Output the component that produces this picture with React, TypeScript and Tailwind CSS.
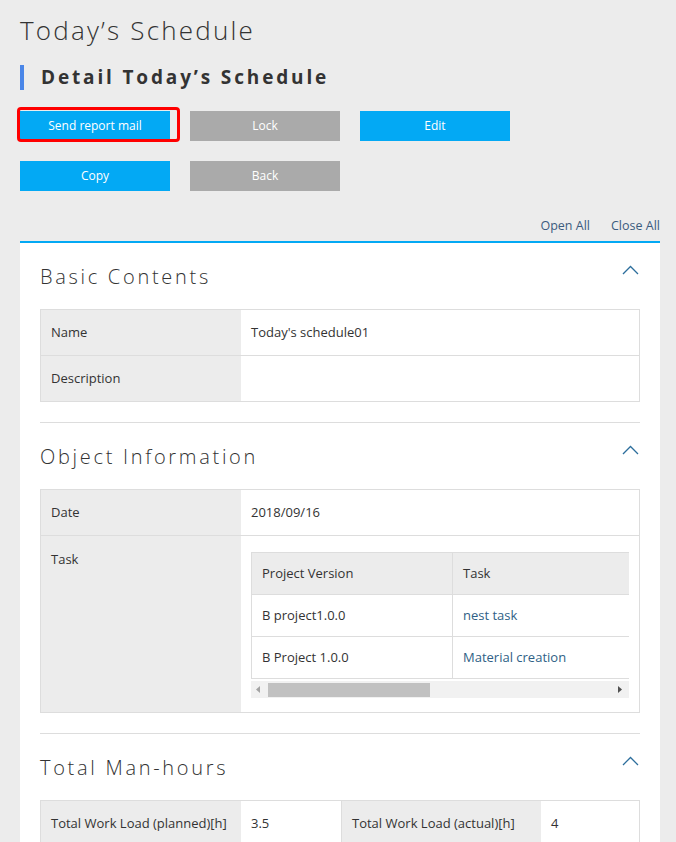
import React from "react";

const Chevron = () => (
  <svg width="17" height="10" viewBox="0 0 17 10" className="absolute right-[1px] top-[22px]">
    <path d="M1 9 L8.5 1.5 L16 9" fill="none" stroke="#2c6e9c" strokeWidth="1.3" />
  </svg>
);

const SectionHead = ({ title }: { title: string }) => (
  <div className="relative pt-[22px] pb-[20px]">
    <div className="text-[20px] leading-[24px] tracking-[2.7px] font-light text-[#333]">{title}</div>
    <Chevron />
  </div>
);

const Row = ({ label, value, last }: { label: string; value: string; last?: boolean }) => (
  <div className={`grid grid-cols-[200px_minmax(0,1fr)] ${last ? "" : "border-b border-[#dddddd]"}`}>
    <div className="bg-[#ececec] pl-[10px] py-[12px] leading-[21px]">{label}</div>
    <div className="pl-[10px] py-[12px] leading-[21px]">{value}</div>
  </div>
);

export default function App() {
  return (
    <div className="w-full h-screen overflow-hidden bg-[#ececec]">
      <div className="pl-5 pr-4 pt-[13px] pb-10 text-[13px] text-[#333] font-['Open_Sans',sans-serif]">
        <h1 className="text-[26px] leading-[34px] tracking-[2.2px] font-light text-[#333]">Today’s Schedule</h1>
        <div className="mt-[18px] flex items-center">
          <div className="w-[4px] h-[25px] bg-[#4a86e8]" />
          <h2 className="ml-[17px] text-[19px] leading-[25px] font-bold tracking-[2.85px] text-[#333]">Detail Today’s Schedule</h2>
        </div>
        <div className="mt-[21px] flex gap-5">
          <div className="relative">
            <button className="w-[150px] h-[30px] bg-[#03a9f4] text-white text-[12px]">Send report mail</button>
            <div className="absolute left-[-3px] top-[-4px] w-[163px] h-[35px] border-[3px] border-[#ff0000] rounded-[4px]" />
          </div>
          <button className="w-[150px] h-[30px] bg-[#aaaaaa] text-white text-[12px]">Lock</button>
          <button className="w-[150px] h-[30px] bg-[#03a9f4] text-white text-[12px]">Edit</button>
        </div>
        <div className="mt-5 flex gap-5">
          <button className="w-[150px] h-[30px] bg-[#03a9f4] text-white text-[12px]">Copy</button>
          <button className="w-[150px] h-[30px] bg-[#aaaaaa] text-white text-[12px]">Back</button>
        </div>
        <div className="mt-[26px] flex justify-end gap-[21px] text-[#3b5b7e] text-[12.5px] leading-[18px]">
          <span>Open All</span>
          <span>Close All</span>
        </div>
        <div className="mt-[6px] border-t-2 border-[#03a9f4] bg-white px-5">
          <section className="border-b border-[#dddddd] pb-5">
            <SectionHead title="Basic Contents" />
            <div className="border border-[#dddddd]">
              <Row label="Name" value="Today's schedule01" />
              <Row label="Description" value="" last />
            </div>
          </section>
          <section className="border-b border-[#dddddd] pb-5">
            <SectionHead title="Object Information" />
            <div className="border border-[#dddddd]">
              <Row label="Date" value="2018/09/16" />
              <div className="grid grid-cols-[200px_minmax(0,1fr)]">
                <div className="bg-[#ececec] pl-[10px] pt-[13px] leading-[21px]">Task</div>
                <div className="min-w-0 px-[10px] pt-[16px] pb-[14px]">
                  <div className="overflow-hidden">
                    <div className="w-[520px] border-l border-t border-[#dddddd]">
                      <div className="grid grid-cols-[201px_1fr] bg-[#ececec] border-b border-[#dddddd]">
                        <div className="border-r border-[#dddddd] pl-[10px] h-[41px] flex items-center">Project Version</div>
                        <div className="pl-[10px] h-[41px] flex items-center">Task</div>
                      </div>
                      <div className="grid grid-cols-[201px_1fr] border-b border-[#dddddd]">
                        <div className="border-r border-[#dddddd] pl-[10px] h-[41px] flex items-center">B project1.0.0</div>
                        <div className="pl-[10px] h-[41px] flex items-center text-[#2f5f86]">nest task</div>
                      </div>
                      <div className="grid grid-cols-[201px_1fr] border-b border-[#dddddd]">
                        <div className="border-r border-[#dddddd] pl-[10px] h-[41px] flex items-center">B Project 1.0.0</div>
                        <div className="pl-[10px] h-[41px] flex items-center text-[#2f5f86]">Material creation</div>
                      </div>
                    </div>
                  </div>
                  <div className="mt-[2px] h-[17px] bg-[#f1f1f1] flex items-center">
                    <svg width="17" height="17" viewBox="0 0 17 17"><path d="M9 5 L5 8.5 L9 12 Z" fill="#a3a3a3" /></svg>
                    <div className="w-[162px] h-[14px] bg-[#c1c1c1]" />
                    <div className="flex-1" />
                    <svg width="17" height="17" viewBox="0 0 17 17"><path d="M6 5 L10 8.5 L6 12 Z" fill="#505050" /></svg>
                  </div>
                </div>
              </div>
            </div>
          </section>
          <section className="pb-5">
            <SectionHead title="Total Man-hours" />
            <div className="border border-[#dddddd] grid grid-cols-[200px_100px_200px_minmax(0,1fr)]">
              <div className="bg-[#ececec] pl-[10px] py-[12px] leading-[21px]">Total Work Load (planned)[h]</div>
              <div className="pl-[10px] py-[12px] leading-[21px]">3.5</div>
              <div className="bg-[#ececec] pl-[10px] py-[12px] leading-[21px] border-l border-[#dddddd]">Total Work Load (actual)[h]</div>
              <div className="pl-[10px] py-[12px] leading-[21px]">4</div>
            </div>
          </section>
        </div>
      </div>
    </div>
  );
}
